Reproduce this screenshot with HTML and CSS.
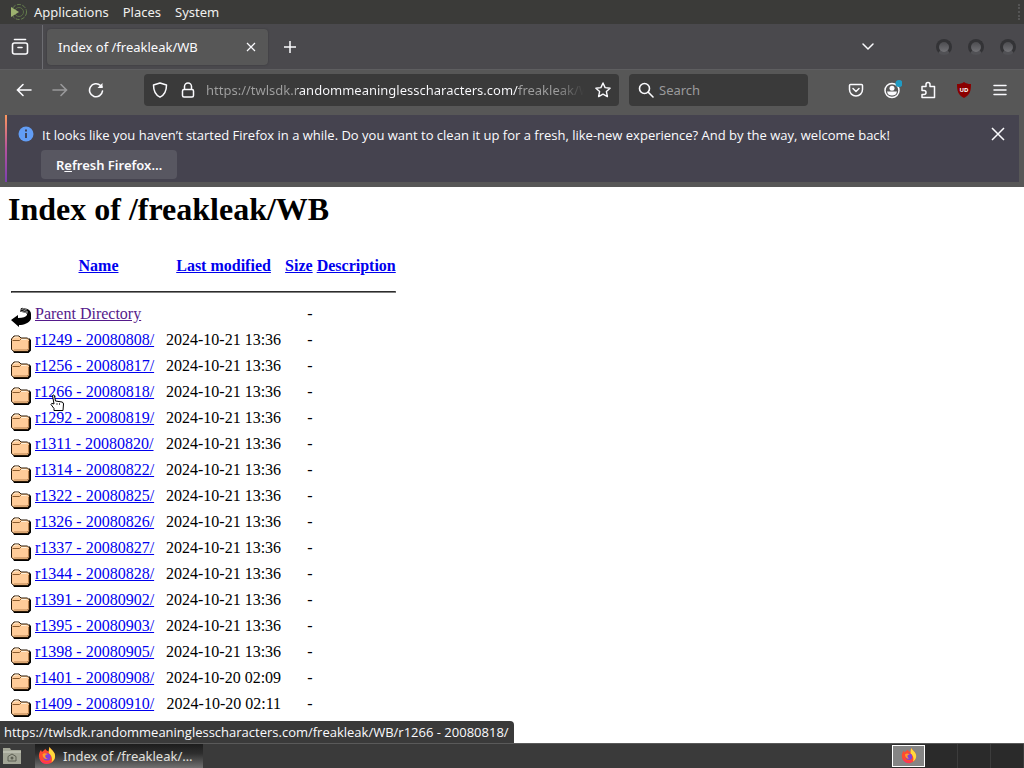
FILE: index.html
```
<!DOCTYPE html>
<html lang="en">
<head>
    <meta charset="UTF-8" />
    <meta name="viewport" content="width=device-width, initial-scale=1" />
    <title>Index of /freakleak/WB</title>
    <link rel="stylesheet" href="styles.css">
</head>
<body>
    <!-- shared shapes -->
    <svg class="symbols" aria-hidden="true">
        <symbol id="folder" viewBox="0 0 20 22">
            <path d="M3 22h14.500l2.500-2.500V9l-2-2v10l-3 3H2z" fill="#000"/>
            <path d="M.5 9.500V8L3 5h5l2 2h6.500l2 2v9l-2 2.500H3l-2.500-2z" fill="#ffcc99" stroke="#2b1a08"/>
            <path d="M1.500 9.500h7l1.500-1.500" fill="none" stroke="#8a5a2c"/>
            <path d="M3 19h13l1.500-1.500V10" fill="none" stroke="#b98350"/>
            <path d="M2.500 7.500L4 6h3.500M10 8.500h5.500" fill="none" stroke="#fff0d8"/>
        </symbol>
        <symbol id="firefox" viewBox="0 0 20 20">
            <path d="M10 19a9 9 0 0 1-9-9c0-3 1-5 2.500-7 0 1 .5 2 1 2.500C6 4 7 4 8 2c1 2 2 2 4 3 0-2 0-3 1-5 1 3 6 5 6 10a9 9 0 0 1-9 9z" fill="#ff4b2f"/>
            <path d="M13 0c1 3 6 5 6 10 0 3-1.500 5.500-4 7 1.500-4 0-8-3-10 0-2 0-5 1-7z" fill="#ffd93b"/>
            <path d="M2 12c2 5 8 7 13 3-2 4-6 4-9 3-2-1-4-3-4-6z" fill="#ff2d66"/>
            <circle cx="10" cy="11" r="4" fill="#8340d8"/>
            <path d="M5 8c2-2 4-1 6 0-2 0-3 1-3 2s1 3 3 3c-3 1-6-1-6-5z" fill="#ff9a2b"/>
        </symbol>
    </svg>

    <header class="panel">
        <svg class="logo" width="20" height="20" viewBox="0 0 20 20">
            <circle cx="11" cy="10" r="7.500" fill="none" stroke="#66804e" stroke-dasharray="4 1.500"/>
            <circle cx="11" cy="10" r="4.500" fill="none" stroke="#5b7045"/>
            <path d="M3 5l8 5-8 5z" fill="#9db36f"/>
        </svg>
        <button class="panel-button">Applications</button>
        <button class="panel-button">Places</button>
        <button class="panel-button">System</button>
        <span class="panel-grip"></span>
    </header>

    <div class="tab-bar">
        <button class="recent" aria-label="Recent browsing">
            <svg width="20" height="20" viewBox="0 0 20 20" fill="none" stroke="#fbfbfe" stroke-width="1.600" stroke-linecap="round"><path d="M4.500 2.500h11"/><rect x="2.500" y="6" width="15" height="11" rx="2"/><path d="M8 10.500h4"/></svg>
        </button>
        <div class="tab">
            <span>Index of /freakleak/WB</span>
            <button class="tab-close" aria-label="Close tab">
                <svg width="10" height="10" viewBox="0 0 10 10" stroke="#fbfbfe" stroke-width="1.200"><path d="M1 1l8 8M9 1l-8 8"/></svg>
            </button>
        </div>
        <button class="new-tab" aria-label="New tab">
            <svg width="12" height="12" viewBox="0 0 12 12" stroke="#fbfbfe" stroke-width="1.500"><path d="M6 0v12M0 6h12"/></svg>
        </button>
        <button class="all-tabs" aria-label="List all tabs">
            <svg width="14" height="10" viewBox="0 0 14 10" fill="none" stroke="#fbfbfe" stroke-width="1.500" stroke-linecap="round"><path d="M2 2l5 5 5-5"/></svg>
        </button>
        <div class="window-buttons">
            <button aria-label="Minimize"></button>
            <button aria-label="Maximize"></button>
            <button aria-label="Close"></button>
        </div>
    </div>

    <nav class="toolbar">
        <button class="tool" aria-label="Back">
            <svg width="16" height="16" viewBox="0 0 16 16" fill="none" stroke="#fbfbfe" stroke-width="1.600" stroke-linecap="round"><path d="M15 8H1.500M7 2.500L1.500 8 7 13.500"/></svg>
        </button>
        <button class="tool disabled" aria-label="Forward">
            <svg width="16" height="16" viewBox="0 0 16 16" fill="none" stroke="#fbfbfe" stroke-width="1.600" stroke-linecap="round"><path d="M1 8h13.500M9 2.500L14.500 8 9 13.500"/></svg>
        </button>
        <button class="tool" aria-label="Reload">
            <svg width="16" height="16" viewBox="0 0 16 16" fill="none" stroke="#fbfbfe" stroke-width="1.600" stroke-linecap="round"><path d="M14.500 9A6.500 6.500 0 1 1 12.500 3.500L14 5"/><path d="M14.500 1v5H9.500z" fill="#fbfbfe" stroke="none"/></svg>
        </button>
        <div class="url-bar">
            <svg width="16" height="16" viewBox="0 0 16 16" fill="none" stroke="#fbfbfe" stroke-width="1.500"><path d="M8 1L14.500 3c0 6-2 10-6.500 12.200C3.500 13 1.500 9 1.500 3z" stroke-linejoin="round"/></svg>
            <svg width="16" height="16" viewBox="0 0 16 16" fill="none" stroke="#fbfbfe" stroke-width="1.500"><rect x="2.500" y="7.500" width="11" height="7.500" rx="1.500"/><path d="M4.500 7.500V4.500a3.500 3.500 0 0 1 7 0v3"/></svg>
            <input class="url" type="text" aria-label="Address" value="https://twlsdk.randommeaninglesscharacters.com/freakleak/WB/" />
            <button class="star" aria-label="Bookmark this page">
                <svg width="16" height="16" viewBox="0 0 16 16" fill="none" stroke="#fbfbfe" stroke-width="1.400" stroke-linejoin="round"><path d="M8 1l2.100 4.600 5 .6-3.700 3.400 1 5L8 12.100l-4.400 2.500 1-5L.9 6.200l5-.6z"/></svg>
            </button>
        </div>
        <label class="search-bar">
            <svg width="16" height="16" viewBox="0 0 16 16" fill="none" stroke="#fbfbfe" stroke-width="1.600" stroke-linecap="round"><circle cx="6.500" cy="6.500" r="5"/><path d="M10.300 10.300L15 15"/></svg>
            <input class="search" type="text" placeholder="Search" aria-label="Search" />
        </label>
        <div class="actions">
            <button class="tool" aria-label="Save to Pocket">
                <svg width="16" height="16" viewBox="0 0 16 16" fill="none" stroke="#fbfbfe" stroke-width="1.500" stroke-linecap="round" stroke-linejoin="round"><path d="M2.500 2.500h11q1 0 1 1V7.500a6.500 6.500 0 0 1-13 0V3.500q0-1 1-1z"/><path d="M5 6.500l3 3 3-3"/></svg>
            </button>
            <button class="tool" aria-label="Account">
                <svg width="20" height="20" viewBox="0 0 20 20"><circle cx="10" cy="10.500" r="7" fill="none" stroke="#fbfbfe" stroke-width="1.500"/><circle cx="10" cy="8.200" r="2.500" fill="#fbfbfe"/><path d="M5 11.500h10c-.5 3-2.500 4-5 4s-4.500-1-5-4z" fill="#fbfbfe"/><circle cx="17" cy="3.500" r="3.500" fill="#1f9bc4"/></svg>
            </button>
            <button class="tool" aria-label="Extensions">
                <svg width="16" height="18" viewBox="0 0 16 18" fill="none" stroke="#fbfbfe" stroke-width="1.500" stroke-linejoin="round"><path d="M2 5.500h4V3.500a2 2 0 0 1 4 0v2h4.500V16.500H2v-3h2a1.800 1.800 0 0 0 0-4H2z"/></svg>
            </button>
            <button class="tool" aria-label="uBlock Origin">
                <svg width="16" height="16" viewBox="0 0 16 16"><path d="M8 0c2 1.500 4 2 7 2 0 7-1 11-7 14C2 13 1 9 1 2c3 0 5-.5 7-2z" fill="#8a0000"/><text class="shield-text" x="8" y="10" text-anchor="middle">UD</text></svg>
            </button>
            <button class="tool" aria-label="Menu">
                <svg width="14" height="12" viewBox="0 0 14 12" stroke="#fbfbfe" stroke-width="1.500" stroke-linecap="round"><path d="M1 1.500h12M1 6h12M1 10.500h12"/></svg>
            </button>
        </div>
    </nav>

    <div class="notification-area">
        <div class="notification">
            <svg class="info" width="16" height="16" viewBox="0 0 16 16"><circle cx="8" cy="8" r="7.500" fill="#629df5"/><path d="M8 7v5M8 3.500v2" stroke="#3c3b4a" stroke-width="1.800"/></svg>
            <div class="notification-body">
                <p>It looks like you haven’t started Firefox in a while. Do you want to clean it up for a fresh, like-new experience? And by the way, welcome back!</p>
                <button class="refresh">R<u>e</u>fresh Firefox…</button>
            </div>
            <button class="dismiss" aria-label="Dismiss">
                <svg width="14" height="14" viewBox="0 0 14 14" stroke="#fbfbfe" stroke-width="1.500"><path d="M1 1l12 12M13 1L1 13"/></svg>
            </button>
        </div>
    </div>

    <main class="page">
        <h1>Index of /freakleak/WB</h1>
        <table>
            <thead>
                <tr>
                    <th class="icon"></th>
                    <th class="name"><a href="#">Name</a></th>
                    <th><a href="#">Last modified</a></th>
                    <th><a href="#">Size</a></th>
                    <th><a href="#">Description</a></th>
                </tr>
                <tr><th colspan="5"><hr></th></tr>
            </thead>
            <tbody id="listing">
                <tr>
                    <td class="icon"><svg width="20" height="22" viewBox="0 0 20 22"><path d="M0 15l7-5v3c5 0 8-1 9-3 .5-2-2-3-7-3l1-4c6 0 10 2 10 6v5c-2 4-7 6-12 6v2z" fill="#000"/><path d="M10 4l7 3M9 6l8 2M11 3l5 2" stroke="#888"/></svg></td>
                    <td><a class="visited" href="#">Parent Directory</a></td>
                    <td></td>
                    <td class="right">-</td>
                    <td></td>
                </tr>
            </tbody>
        </table>
        <svg class="cursor" width="16" height="18" viewBox="0 0 16 18"><path d="M3.500 1.500q1.500-1.500 2 .5l1 5 6.500 1q1.500.5 1.500 2l-.5 6.500h-9v-2l-3-4q0-2 3-.5z" fill="#fff" stroke="#000"/><path d="M8 9v2M10.500 9v2" stroke="#555"/></svg>
        <div class="status">https://twlsdk.randommeaninglesscharacters.com/freakleak/WB/r1266 - 20080818/</div>
    </main>

    <footer class="taskbar">
        <button class="show-files" aria-label="Files">
            <svg width="20" height="18" viewBox="0 0 20 18"><path d="M1 1h7l1 2h10v14H1z" fill="#a3a596"/><path d="M1 5h18" stroke="#d0d2c4"/><path d="M6 14V9.500l4-2.500 4 2.500V14z" fill="none" stroke="#5c5e52"/><circle cx="10" cy="11" r="1.500" fill="#5c5e52"/></svg>
        </button>
        <button class="task">
            <svg width="18" height="18"><use href="#firefox"/></svg>
            <span>Index of /freakleak/…</span>
        </button>
        <div class="workspaces">
            <button class="workspace active" aria-label="Workspace 1"><svg width="16" height="16"><use href="#firefox"/></svg></button>
            <button class="workspace" aria-label="Workspace 2"></button>
            <button class="workspace" aria-label="Workspace 3"></button>
            <button class="workspace" aria-label="Workspace 4"></button>
        </div>
    </footer>

    <script>
        const entries = [
            ['r1249 - 20080808/', '2024-10-21 13:36'],
            ['r1256 - 20080817/', '2024-10-21 13:36'],
            ['r1266 - 20080818/', '2024-10-21 13:36'],
            ['r1292 - 20080819/', '2024-10-21 13:36'],
            ['r1311 - 20080820/', '2024-10-21 13:36'],
            ['r1314 - 20080822/', '2024-10-21 13:36'],
            ['r1322 - 20080825/', '2024-10-21 13:36'],
            ['r1326 - 20080826/', '2024-10-21 13:36'],
            ['r1337 - 20080827/', '2024-10-21 13:36'],
            ['r1344 - 20080828/', '2024-10-21 13:36'],
            ['r1391 - 20080902/', '2024-10-21 13:36'],
            ['r1395 - 20080903/', '2024-10-21 13:36'],
            ['r1398 - 20080905/', '2024-10-21 13:36'],
            ['r1401 - 20080908/', '2024-10-20 02:09'],
            ['r1409 - 20080910/', '2024-10-20 02:11']
        ];
        const listing = document.getElementById('listing');

        entries.forEach(([name, modified]) => {
            const row = document.createElement('tr');
            row.innerHTML = `
                <td class="icon"><svg width="20" height="22"><use href="#folder"/></svg></td>
                <td><a href="#">${name}</a></td>
                <td class="right">${modified}</td>
                <td class="right">-</td>
                <td></td>`;
            listing.appendChild(row);
        });
    </script>
</body>
</html>
```
FILE: styles.css
```
* {
    box-sizing: border-box;
}
body {
    margin: 0;
    height: 100vh;
    display: flex;
    flex-direction: column;
    overflow: hidden;
    background: #fff;
    font-family: "Noto Sans", sans-serif;
    font-size: 13px;
    line-height: 18px;
}
button, input {
    font: inherit;
    color: inherit;
    background: none;
    border: none;
    padding: 0;
    margin: 0;
    outline: none;
}
button {
    display: flex;
    align-items: center;
    justify-content: center;
}
svg {
    display: block;
    flex-shrink: 0;
}
.symbols {
    position: absolute;
    width: 0;
    height: 0;
}

/* desktop panel */
.panel {
    height: 24px;
    display: flex;
    align-items: center;
    padding: 0 2px 0 8px;
    background: #3b3b39;
    color: #f0f0ee;
}
.logo {
    margin-right: 6px;
}
.panel-button {
    margin-right: 14px;
}
.panel-grip {
    width: 4px;
    height: 16px;
    margin-left: auto;
    border-left: 2px dotted #555;
}

/* tabs */
.tab-bar {
    height: 45px;
    display: flex;
    align-items: center;
    padding-top: 1px;
    background: #4a494d;
    color: #fbfbfe;
}
.recent {
    width: 43px;
    height: 44px;
    padding-right: 3px;
    border-right: 1px solid #6d6d72;
}
.tab {
    width: 221px;
    height: 36px;
    margin-left: 4px;
    padding: 0 12px 0 11px;
    display: flex;
    align-items: center;
    justify-content: space-between;
    background: #575757;
    border-radius: 4px;
    box-shadow: 0 0 2px #38383b;
}
.new-tab {
    width: 36px;
    height: 36px;
    margin-left: 4px;
}
.all-tabs {
    width: 36px;
    height: 36px;
    margin-left: auto;
}
.window-buttons {
    display: flex;
    gap: 16px;
    margin-left: 50px;
    padding-right: 8px;
}
.window-buttons button {
    width: 16px;
    height: 16px;
    border-radius: 50%;
    border: 3px solid #333336;
    border-bottom-color: #515155;
    background: linear-gradient(#4c4c50, #727276);
}

/* navigation */
.toolbar {
    height: 44px;
    display: flex;
    align-items: center;
    padding: 0 6px 3px;
    background: #575757;
    border-top: 1px solid #5e5e60;
    color: #fbfbfe;
}
.tool {
    width: 36px;
    height: 32px;
}
.disabled {
    opacity: 0.4;
}
.url-bar, .search-bar {
    height: 32px;
    display: flex;
    align-items: center;
    background: #3a3a3a;
    border-radius: 4px;
}
.url-bar {
    flex: 1;
    min-width: 0;
    margin-left: 30px;
    padding: 0 8px;
    gap: 12px;
}
.url {
    flex: 1;
    min-width: 0;
    margin-right: -4px;
    margin-left: -2px;
    color: transparent;
    background: linear-gradient(90deg, #a0a0a0 91px, #fbfbfe 91px, #fbfbfe 313px, #a0a0a0 313px, #a0a0a0 350px, transparent 378px);
    -webkit-background-clip: text;
    background-clip: text;
}
.search-bar {
    width: 179px;
    margin-left: 10px;
    padding: 0 8px 0 9px;
    gap: 5px;
}
.search {
    flex: 1;
    min-width: 0;
}
.search::placeholder {
    color: #9a9a9c;
    opacity: 1;
}
.actions {
    display: flex;
    margin-left: 30px;
}
.shield-text {
    font-size: 6px;
    font-weight: bold;
    fill: #fff;
}

/* notification */
.notification-area {
    padding: 2px 5px 5px;
    background: #575757;
}
.notification {
    display: flex;
    align-items: flex-start;
    padding: 10px 13px 3px 11px;
    background: #45434f;
    border-left: 2px solid;
    border-image: linear-gradient(#ff9a5a, #b5539e, #7a3fb0) 1;
    color: #fbfbfe;
}
.info {
    margin-top: 1px;
}
.notification-body {
    flex: 1;
    margin-left: 7px;
}
.notification p {
    margin: 1px 0 6px 1px;
    font-family: "Open Sans", sans-serif;
}
.refresh {
    height: 29px;
    padding: 0 15px;
    background: #585761;
    border-radius: 4px;
    font-weight: 600;
}
.dismiss {
    width: 16px;
    height: 18px;
}

/* directory listing */
.page {
    flex: 1;
    min-height: 0;
    position: relative;
    padding: 4px 8px;
    background: #fff;
    color: #000;
    font-family: "Liberation Serif", serif;
    font-size: 16px;
}
h1 {
    margin: 0 0 26px;
    font-size: 32px;
    line-height: 37px;
}
table {
    border-spacing: 2px;
}
th, td {
    padding: 1px;
    vertical-align: top;
}
.icon {
    width: 22px;
    height: 24px;
}
.name {
    width: 129px;
}
.right {
    text-align: right;
}
a {
    color: #0000ee;
}
.visited {
    color: #551a8b;
}
hr {
    margin: 8px 0;
    border: 1px inset #808080;
}
.cursor {
    position: absolute;
    left: 49px;
    top: 207px;
}
.status {
    position: absolute;
    left: 0;
    bottom: 0;
    padding: 2px 5px 2px 4px;
    background: #3a3a3a;
    border-top-right-radius: 4px;
    color: #fbfbfe;
    font-family: "Open Sans", sans-serif;
    font-size: 13px;
}

/* taskbar */
.taskbar {
    height: 25px;
    display: flex;
    align-items: center;
    background: #3a3a3a;
    border-top: 1px solid #5a5a5a;
    color: #e0e0de;
}
.show-files {
    width: 24px;
    margin-right: 11px;
}
.task {
    width: 168px;
    height: 24px;
    justify-content: flex-start;
    gap: 7px;
    padding-left: 3px;
    background: linear-gradient(#1c1c1c, #2e2e2e 40%, #707070);
}
.workspaces {
    display: flex;
    margin-left: auto;
    background: #2a2a2a;
}
.workspace {
    width: 33px;
    height: 24px;
    border-right: 1px solid #3c3c3c;
}
.workspace.active {
    height: 22px;
    margin-top: 1px;
    background: #858585;
    border: 1px solid #fff;
}
```
